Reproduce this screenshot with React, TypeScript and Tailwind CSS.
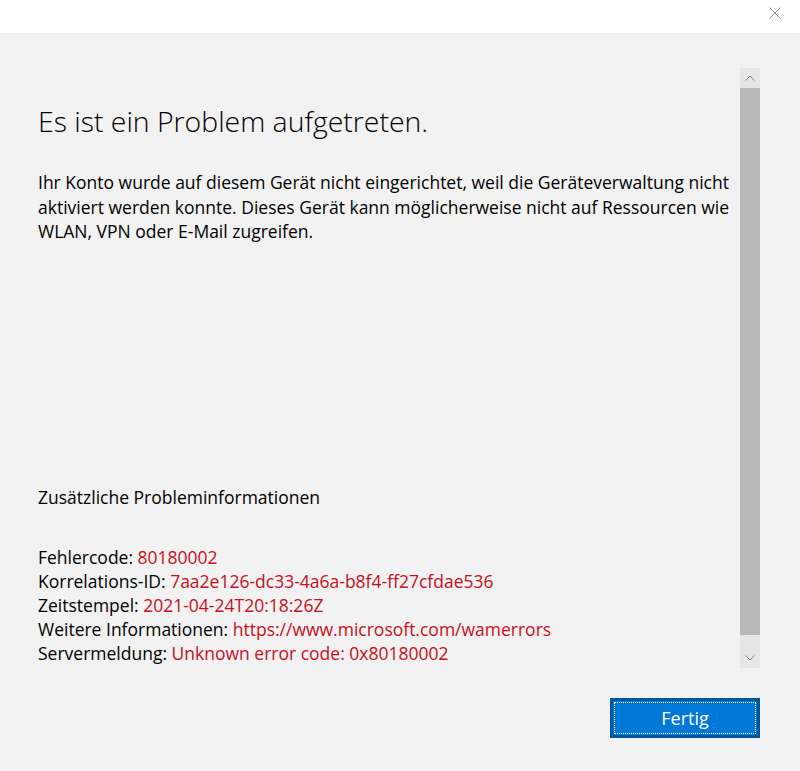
export default function App() {
  const details: [string, string][] = [
    ["Fehlercode:", "80180002"],
    ["Korrelations-ID:", "7aa2e126-dc33-4a6a-b8f4-ff27cfdae536"],
    ["Zeitstempel:", "2021-04-24T20:18:26Z"],
    ["Weitere Informationen:", "https://www.microsoft.com/wamerrors"],
    ["Servermeldung:", "Unknown error code: 0x80180002"],
  ];

  return (
    <div
      className="flex h-[771px] w-[800px] flex-col overflow-hidden bg-[#f2f2f2] text-black"
      style={{ fontFamily: '"Open Sans", "Noto Sans", sans-serif' }}
    >
      {/* title bar */}
      <div className="flex h-[33px] items-start justify-end bg-white">
        <button className="mr-[19px] mt-[7px] flex h-[12px] w-[12px] items-center justify-center">
          <svg width="12" height="12" viewBox="0 0 12 12" stroke="#8c8c8c" strokeWidth="1">
            <path d="M0.5 0.5 L11.5 11.5 M11.5 0.5 L0.5 11.5" />
          </svg>
        </button>
      </div>

      <div className="flex h-[635px]">
        {/* content */}
        <div className="flex flex-1 flex-col pl-[38px] pr-[4px]">
          <h1 className="mt-[70px] whitespace-nowrap text-[28.4px] font-light leading-[36px]">
            Es ist ein Problem aufgetreten.
          </h1>
          <p className="mt-[31px] whitespace-nowrap text-[17.5px] leading-[24.5px]">
            Ihr Konto wurde auf diesem Gerät nicht eingerichtet, weil die Geräteverwaltung nicht
            <br />
            aktiviert werden konnte. Dieses Gerät kann möglicherweise nicht auf Ressourcen wie
            <br />
            WLAN, VPN oder E-Mail zugreifen.
          </p>

          <div className="mt-auto pb-[3px] text-[17.5px] leading-[24px]">
            <div>Zusätzliche Probleminformationen</div>
            <div className="mt-[36px]">
              {details.map(([label, value]) => (
                <div key={label} className="whitespace-nowrap">
                  {label} <span className="text-[#c8101a]">{value}</span>
                </div>
              ))}
            </div>
          </div>
        </div>

        {/* scrollbar */}
        <div className="mr-[40px] mt-[35px] flex h-[600px] w-[20px] shrink-0 flex-col bg-[#e6e6e6]">
          <div className="flex h-[20px] items-center justify-center">
            <svg width="10" height="6" viewBox="0 0 10 6" fill="none" stroke="#7a7a7a" strokeWidth="1">
              <path d="M0.5 5.5 L5 1 L9.5 5.5" />
            </svg>
          </div>
          <div className="h-[547px] bg-[#b9b9b9]" />
          <div className="flex flex-1 items-end justify-center pb-[7px]">
            <svg width="10" height="6" viewBox="0 0 10 6" fill="none" stroke="#7a7a7a" strokeWidth="1">
              <path d="M0.5 0.5 L5 5 L9.5 0.5" />
            </svg>
          </div>
        </div>
      </div>

      {/* footer */}
      <div className="flex justify-end pr-[40px] pt-[30px]">
        <button className="h-[40px] w-[150px] border-[3px] border-[#00569c] bg-[#0078d7] p-[1px]">
          <div className="flex h-full w-full items-center justify-center border border-dotted border-white text-[18px] leading-none text-white">
            Fertig
          </div>
        </button>
      </div>
    </div>
  );
}
